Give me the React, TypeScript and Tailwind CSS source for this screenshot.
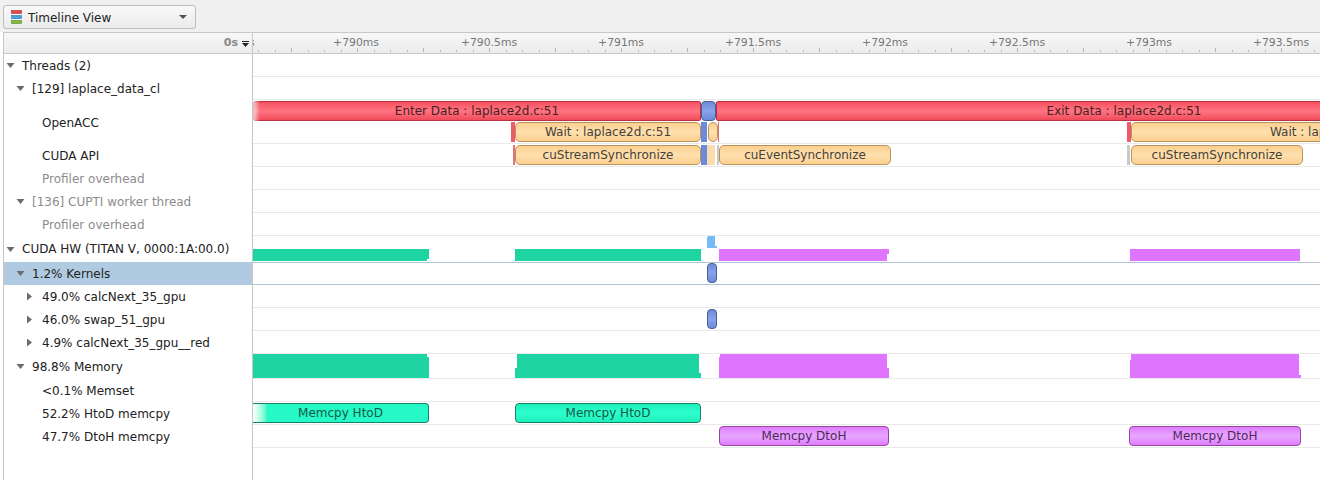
import React from 'react';

const red = 'border border-[#b8323f] bg-gradient-to-b from-[#f5505f] via-[#ff7482] to-[#f04a5a] rounded-[2px] text-[#4a2024]';
const orange = 'border border-[#b8935a] bg-gradient-to-b from-[#fbcf8f] via-[#ffe0ae] to-[#fbcf8f] rounded-[5px] text-[#45403a]';
const blue = 'border border-[#4a5f96] bg-gradient-to-b from-[#6c8ad8] via-[#88a4ec] to-[#6c8ad8] rounded-[4px]';
const teal = 'border border-[#17806a] bg-gradient-to-b from-[#1ef0bc] via-[#2bffcb] to-[#1ef0bc] rounded-[4px] text-[#17594a]';
const violet = 'border border-[#96489f] bg-gradient-to-b from-[#de7cff] via-[#e9a6ff] to-[#de7cff] rounded-[4px] text-[#4d2a5a]';

const rulerLabels = [
  { text: '+790ms', cls: 'left-[73px]' },
  { text: '+790.5ms', cls: 'left-[206px]' },
  { text: '+791ms', cls: 'left-[338px]' },
  { text: '+791.5ms', cls: 'left-[470px]' },
  { text: '+792ms', cls: 'left-[602px]' },
  { text: '+792.5ms', cls: 'left-[734px]' },
  { text: '+793ms', cls: 'left-[866px]' },
  { text: '+793.5ms', cls: 'left-[998px]' },
];

const Caret = ({ open }: { open: boolean }) =>
  open ? (
    <svg width="9" height="5" viewBox="0 0 9 5" className="shrink-0">
      <path d="M0.5 0h8L4.5 5z" fill="#6b6b6b" />
    </svg>
  ) : (
    <svg width="5" height="9" viewBox="0 0 5 9" className="ml-[1px] shrink-0">
      <path d="M0 0.5v8L5 4.5z" fill="#6b6b6b" />
    </svg>
  );

const Bar = ({ cls, text }: { cls: string; text?: string }) => (
  <div className={`absolute flex items-center justify-center whitespace-nowrap text-[12px] ${cls}`}>
    {text}
  </div>
);

type Row = {
  label: string;
  indent: string;
  h: string;
  caret?: boolean;
  muted?: boolean;
  selected?: boolean;
  bars?: { cls: string; text?: string }[];
};

const rows: Row[] = [
  { label: 'Threads (2)', indent: 'pl-[2px]', h: 'h-[23px]', caret: true },
  { label: '[129] laplace_data_cl', indent: 'pl-[12px]', h: 'h-[23px]', caret: true },
  {
    label: 'OpenACC',
    indent: 'pl-[38px] pt-[1px]',
    h: 'h-[44px]',
    bars: [
      { cls: `${red} left-0 w-[448px] top-[1px] h-[20px]`, text: 'Enter Data : laplace2d.c:51' },
      { cls: 'bg-gradient-to-r from-white/70 to-transparent left-0 w-[7px] top-[1px] h-[20px]' },
      { cls: `${blue} left-[448px] w-[15px] top-[1px] h-[20px]` },
      { cls: `${red} left-[463px] w-[816px] top-[1px] h-[20px]`, text: 'Exit Data : laplace2d.c:51' },
      { cls: 'bg-[#ee5a68] left-[258px] w-[4px] top-[22px] h-[20px]' },
      { cls: `${orange} left-[262px] w-[186px] top-[22px] h-[20px]`, text: 'Wait : laplace2d.c:51' },
      { cls: 'bg-[#6c8ad8] left-[448px] w-[6px] top-[22px] h-[20px]' },
      { cls: `${orange} left-[455px] w-[10px] top-[22px] h-[20px]` },
      { cls: 'bg-[#e0707c] left-[465px] w-[1px] top-[22px] h-[20px]' },
      { cls: 'bg-[#ee5a68] left-[874px] w-[4px] top-[22px] h-[20px]' },
      { cls: `${orange} left-[878px] w-[404px] top-[22px] h-[20px]`, text: 'Wait : laplace2d.c:51' },
    ],
  },
  {
    label: 'CUDA API',
    indent: 'pl-[38px]',
    h: 'h-[23px]',
    bars: [
      { cls: 'bg-[#e8707c] left-[260px] w-[2px] top-[1px] h-[20px]' },
      { cls: `${orange} left-[262px] w-[186px] top-[1px] h-[20px]`, text: 'cuStreamSynchronize' },
      { cls: 'bg-[#6c8ad8] left-[448px] w-[6px] top-[1px] h-[20px]' },
      { cls: 'bg-[#fbdcae] left-[454px] w-[8px] top-[1px] h-[20px]' },
      { cls: 'bg-[#c9c9c9] left-[464px] w-[2px] top-[1px] h-[20px]' },
      { cls: `${orange} left-[466px] w-[172px] top-[1px] h-[20px]`, text: 'cuEventSynchronize' },
      { cls: 'bg-[#c9c9c9] left-[874px] w-[3px] top-[1px] h-[20px]' },
      { cls: `${orange} left-[878px] w-[172px] top-[1px] h-[20px]`, text: 'cuStreamSynchronize' },
    ],
  },
  { label: 'Profiler overhead', indent: 'pl-[38px]', h: 'h-[23px]', muted: true },
  { label: '[136] CUPTI worker thread', indent: 'pl-[12px]', h: 'h-[23px]', caret: true, muted: true },
  { label: 'Profiler overhead', indent: 'pl-[38px]', h: 'h-[23px]', muted: true },
  {
    label: 'CUDA HW (TITAN V, 0000:1A:00.0)',
    indent: 'pl-[2px]',
    h: 'h-[26px]',
    caret: true,
    bars: [
      { cls: 'bg-[#1dd4a2] left-0 w-[174px] top-[13px] h-[12px]' },
      { cls: 'bg-[#1dd4a2] left-[174px] w-[2px] top-[13px] h-[10px]' },
      { cls: 'bg-[#1dd4a2] left-[262px] w-[186px] top-[13px] h-[12px]' },
      { cls: 'bg-[#74bcf5] left-[455px] w-[7px] top-0 h-[12px]' },
      { cls: 'bg-[#74bcf5] left-[454px] w-[1px] top-[1px] h-[11px]' },
      { cls: 'bg-[#74bcf5] left-[462px] w-[2px] top-[10px] h-[2px]' },
      { cls: 'bg-[#df74ff] left-[466px] w-[170px] top-[13px] h-[5px]' },
      { cls: 'bg-[#df74ff] left-[466px] w-[168px] top-[18px] h-[7px]' },
      { cls: 'bg-[#df74ff] left-[877px] w-[170px] top-[13px] h-[12px]' },
    ],
  },
  {
    label: '1.2% Kernels',
    indent: 'pl-[12px]',
    h: 'h-[23px]',
    caret: true,
    selected: true,
    bars: [{ cls: `${blue} left-[454px] w-[10px] top-0 h-[20px]` }],
  },
  { label: '49.0% calcNext_35_gpu', indent: 'pl-[22px]', h: 'h-[23px]', caret: false },
  {
    label: '46.0% swap_51_gpu',
    indent: 'pl-[22px]',
    h: 'h-[23px]',
    caret: false,
    bars: [{ cls: `${blue} left-[454px] w-[10px] top-[1px] h-[20px]` }],
  },
  { label: '4.9% calcNext_35_gpu__red', indent: 'pl-[22px]', h: 'h-[23px]', caret: false },
  {
    label: '98.8% Memory',
    indent: 'pl-[12px]',
    h: 'h-[25px]',
    caret: true,
    bars: [
      { cls: 'bg-[#1dd4a2] left-0 w-[174px] top-0 h-[3px]' },
      { cls: 'bg-[#1dd4a2] left-0 w-[176px] top-[3px] h-[21px]' },
      { cls: 'bg-[#1dd4a2] left-[264px] w-[182px] top-0 h-[14px]' },
      { cls: 'bg-[#1dd4a2] left-[262px] w-[184px] top-[14px] h-[5px]' },
      { cls: 'bg-[#1dd4a2] left-[262px] w-[186px] top-[19px] h-[5px]' },
      { cls: 'bg-[#df74ff] left-[467px] w-[167px] top-0 h-[3px]' },
      { cls: 'bg-[#df74ff] left-[466px] w-[168px] top-[3px] h-[11px]' },
      { cls: 'bg-[#df74ff] left-[466px] w-[170px] top-[14px] h-[10px]' },
      { cls: 'bg-[#df74ff] left-[878px] w-[168px] top-0 h-[6px]' },
      { cls: 'bg-[#df74ff] left-[877px] w-[169px] top-[6px] h-[15px]' },
      { cls: 'bg-[#df74ff] left-[877px] w-[171px] top-[21px] h-[3px]' },
    ],
  },
  { label: '<0.1% Memset', indent: 'pl-[38px]', h: 'h-[23px]' },
  {
    label: '52.2% HtoD memcpy',
    indent: 'pl-[38px]',
    h: 'h-[23px]',
    bars: [
      {
        cls: 'border-y border-r border-[#17806a] bg-gradient-to-r from-white to-[#25f9c5] to-[8%] rounded-r-[4px] left-0 w-[176px] top-[1px] h-[20px] text-[#17594a]',
        text: 'Memcpy HtoD',
      },
      { cls: `${teal} left-[262px] w-[186px] top-[1px] h-[20px]`, text: 'Memcpy HtoD' },
    ],
  },
  {
    label: '47.7% DtoH memcpy',
    indent: 'pl-[38px]',
    h: 'h-[23px]',
    bars: [
      { cls: `${violet} left-[466px] w-[170px] top-[1px] h-[20px]`, text: 'Memcpy DtoH' },
      { cls: `${violet} left-[876px] w-[172px] top-[1px] h-[20px]`, text: 'Memcpy DtoH' },
    ],
  },
];

const ticks = Array.from({ length: 65 }, (_, i) => i);

export default function App() {
  return (
    <div className="flex h-[480px] w-[1320px] flex-col overflow-hidden bg-white font-['DejaVu_Sans',sans-serif] text-[12px] text-[#222]">
      {/* Toolbar */}
      <div className="flex h-[32px] shrink-0 items-start bg-[#f0f0f0] pl-[3px] pt-[5px]">
        <div className="flex h-[24px] w-[193px] items-center rounded-[3px] border border-[#bdbdbd] bg-gradient-to-b from-[#f9f9f9] to-[#ebebeb] pl-[7px] pr-[8px]">
          <svg width="12" height="14" viewBox="0 0 12 14" className="shrink-0">
            <rect x="0.5" y="0.5" width="10" height="3" fill="#e9434b" stroke="#a83238" strokeWidth="0.6" />
            <rect x="0.5" y="5.5" width="10" height="3" fill="#3ba5dd" stroke="#2a76a0" strokeWidth="0.6" />
            <rect x="0.5" y="10.5" width="10" height="3" fill="#80bb3c" stroke="#5c8a2a" strokeWidth="0.6" />
          </svg>
          <span className="ml-[5px] flex-1 pt-[1px]">Timeline View</span>
          <svg width="8" height="4" viewBox="0 0 8 4" className="shrink-0">
            <path d="M0 0h8L4 4z" fill="#555" />
          </svg>
        </div>
      </div>

      <div className="ml-[3px] flex flex-1 flex-col border-l border-[#c8c8c8]">
        {/* Header */}
        <div className="flex h-[22px] shrink-0 border-y border-[#c8c8c8] bg-gradient-to-b from-[#f7f7f7] to-[#ececec]">
          <div className="flex w-[249px] shrink-0 items-center justify-end border-r border-[#c8c8c8] pr-[3px] pt-[1px] text-[11px] font-bold text-[#8a8a8a]">
            0s
            <svg width="7" height="6" viewBox="0 0 7 6" className="ml-[4px]">
              <path d="M0 0h7v1H0zM0 2h7L3.5 6z" fill="#222" />
            </svg>
          </div>
          <div className="relative flex-1 overflow-hidden text-[10.8px] text-[#777]">
            <span className="absolute left-[-4px] top-[2px]">s</span>
            {rulerLabels.map((l) => (
              <span key={l.text} className={`absolute top-[2px] w-[60px] text-center ${l.cls}`}>
                {l.text}
              </span>
            ))}
            <svg width="1067" height="5" viewBox="0 0 1067 5" className="absolute bottom-0 left-0">
              {ticks.map((i) => (
                <rect
                  key={i}
                  x={Math.round(5 + i * 16.5)}
                  y={i % 4 === 2 ? 0 : 2}
                  width="1"
                  height={i % 4 === 2 ? 4 : 2}
                  fill="#b5b5b5"
                />
              ))}
            </svg>
          </div>
        </div>

        {/* Rows */}
        {rows.map((row) => (
          <div key={row.label + row.indent + row.h + (row.bars ? row.bars.length : 0)} className={`flex shrink-0 ${row.h}`}>
            <div
              className={`flex w-[249px] shrink-0 items-center border-r border-[#c8c8c8] ${row.indent} ${
                row.selected ? 'bg-[#b0cbe1]' : ''
              } ${row.muted ? 'text-[#8c8c8c]' : ''}`}
            >
              {row.caret !== undefined && (
                <span className="flex w-[16px] shrink-0 items-center">
                  <Caret open={row.caret} />
                </span>
              )}
              <span className="whitespace-nowrap">{row.label}</span>
            </div>
            <div
              className={`relative flex-1 overflow-hidden ${
                row.selected ? 'border-y border-[#afc4d6]' : row.h === 'h-[26px]' ? '' : 'border-b border-[#e9e9e9]'
              }`}
            >
              {row.bars?.map((b) => (
                <Bar key={b.cls} cls={b.cls} text={b.text} />
              ))}
            </div>
          </div>
        ))}
        <div className="flex flex-1">
          <div className="w-[249px] shrink-0 border-r border-[#c8c8c8]" />
        </div>
      </div>
    </div>
  );
}
